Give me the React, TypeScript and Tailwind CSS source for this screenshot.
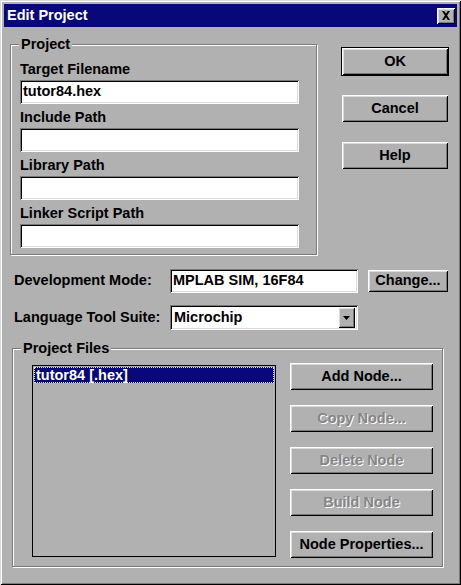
import React from "react";

const raised =
  "shadow-[inset_1px_1px_0_#ffffff,inset_-1px_-1px_0_#000000,inset_2px_2px_0_#dcdcdc,inset_-2px_-2px_0_#7a7a7a]";
const sunken =
  "shadow-[inset_1px_1px_0_#7a7a7a,inset_-1px_-1px_0_#ffffff,inset_2px_2px_0_#000000,inset_-2px_-2px_0_#dcdcdc]";

function Btn({
  label,
  disabled,
  def,
  className = "",
}: {
  label: string;
  disabled?: boolean;
  def?: boolean;
  className?: string;
}) {
  return (
    <div
      className={`flex items-center justify-center bg-[#b1b1b1] ${raised} ${
        def ? "outline outline-1 outline-black" : ""
      } ${className}`}
    >
      <span
        className={
          disabled
            ? "text-[#858585] [text-shadow:1px_1px_0_#ffffff]"
            : "text-black"
        }
      >
        {label}
      </span>
    </div>
  );
}

function Field({ label, value = "" }: { label: string; value?: string }) {
  return (
    <div>
      <div className="pt-[5px] pb-[3px] leading-[16px]">{label}</div>
      <div className={`h-[24px] w-[279px] bg-white ${sunken} px-[3px] flex items-center`}>
        {value}
      </div>
    </div>
  );
}

function Group({
  label,
  className = "",
  children,
}: {
  label: string;
  className?: string;
  children: React.ReactNode;
}) {
  return (
    <div
      className={`relative border border-[#7a7a7a] shadow-[1px_1px_0_#ffffff,inset_1px_1px_0_#ffffff] ${className}`}
    >
      <div className="absolute left-[8px] top-[-9px] bg-[#b1b1b1] px-[2px] leading-[16px]">
        {label}
      </div>
      {children}
    </div>
  );
}

export default function App() {
  return (
    <div
      className="w-[461px] h-[585px] bg-[#b1b1b1] p-[4px] text-[14.5px] font-bold text-black shadow-[inset_1px_1px_0_#dcdcdc,inset_-1px_-1px_0_#000000,inset_2px_2px_0_#ffffff,inset_-2px_-2px_0_#7a7a7a] select-none"
      style={{ fontFamily: '"Liberation Sans", Arial, sans-serif' }}
    >
      {/* title bar */}
      <div className="h-[23px] bg-[#08087a] flex items-center justify-between pl-[3px] pr-[2px]">
        <span className="text-white text-[14.5px] leading-none">Edit Project</span>
        <div className={`w-[18px] h-[16px] bg-[#b1b1b1] ${raised} flex items-center justify-center`}>
          <svg width="10" height="9" viewBox="0 0 10 9">
            <path d="M1 0h2.2l1.8 2.8L6.8 0H9L6.1 4.5L9 9H6.8L5 6.2L3.2 9H1l2.9-4.5z" fill="#000" />
          </svg>
        </div>
      </div>

      {/* top section */}
      <div className="flex mt-[17px] ml-[6px]">
        <Group label="Project" className="w-[307px] h-[211px] pl-[9px] pt-[11px]">
          <Field label="Target Filename" value="tutor84.hex" />
          <Field label="Include Path" />
          <Field label="Library Path" />
          <Field label="Linker Script Path" />
        </Group>
        <div className="ml-[25px] mt-[4px] flex flex-col gap-[20px]">
          <Btn label="OK" def className="w-[106px] h-[27px]" />
          <Btn label="Cancel" className="w-[106px] h-[27px]" />
          <Btn label="Help" className="w-[106px] h-[27px]" />
        </div>
      </div>

      {/* dev mode row */}
      <div className="flex items-center mt-[14px] ml-[10px]">
        <div className="w-[156px]">Development Mode:</div>
        <div className={`w-[188px] h-[24px] bg-white ${sunken} px-[3px] flex items-center`}>
          MPLAB SIM, 16F84
        </div>
        <Btn label="Change..." className="ml-[10px] w-[80px] h-[22px]" />
      </div>

      {/* language row */}
      <div className="flex items-center mt-[12px] ml-[10px]">
        <div className="w-[156px]">Language Tool Suite:</div>
        <div className={`w-[188px] h-[25px] bg-white ${sunken} pl-[4px] pr-[3px] flex items-center justify-between`}>
          <span>Microchip</span>
          <div className={`w-[17px] h-[21px] bg-[#b1b1b1] ${raised} flex items-center justify-center`}>
            <svg width="7" height="4" viewBox="0 0 7 4">
              <path d="M0 0h7L3.5 4z" fill="#000" />
            </svg>
          </div>
        </div>
      </div>

      {/* project files */}
      <Group label="Project Files" className="mt-[18px] ml-[8px] w-[431px] h-[219px] flex pl-[19px] pt-[16px]">
        <div className="w-[244px] h-[192px] border border-black bg-[#b1b1b1] p-[1px]">
          <div className="h-[16px] bg-[#08087a] text-white leading-[14px] border border-dotted border-[#e0e0ff] pl-[1px]">
            tutor84 [.hex]
          </div>
        </div>
        <div className="ml-[14px] -mt-[2px] flex flex-col gap-[15px]">
          <Btn label="Add Node..." className="w-[143px] h-[27px]" />
          <Btn label="Copy Node..." disabled className="w-[143px] h-[27px]" />
          <Btn label="Delete Node" disabled className="w-[143px] h-[27px]" />
          <Btn label="Build Node" disabled className="w-[143px] h-[27px]" />
          <Btn label="Node Properties..." className="w-[143px] h-[27px]" />
        </div>
      </Group>
    </div>
  );
}
